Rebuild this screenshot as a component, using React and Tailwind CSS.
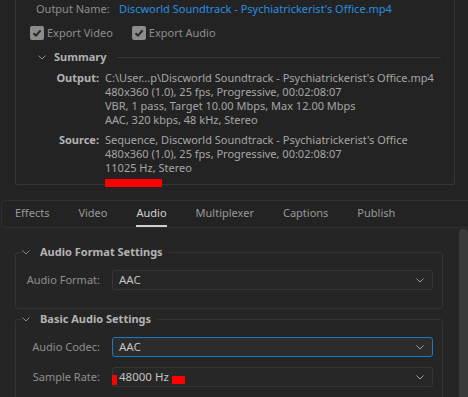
import React from 'react';

const Chevron = ({ className = '' }) => (
  <svg width="8" height="5" viewBox="0 0 8 5" className={className}>
    <path d="M0.5 0.5 L4 4 L7.5 0.5" fill="none" stroke="currentColor" strokeWidth="1" />
  </svg>
);

const Check = () => (
  <span className="w-[14px] h-[14px] rounded-[2px] bg-[#8c8c8c] flex items-center justify-center">
    <svg width="10" height="10" viewBox="0 0 10 10">
      <path d="M1.5 5.2 L4 7.6 L8.6 2.4" fill="none" stroke="#262626" strokeWidth="2" />
    </svg>
  </span>
);

const Dropdown = ({ value, focused }) => (
  <div
    className={`w-[321px] h-[20px] rounded-[3px] border flex items-center justify-between pl-[6px] pr-[8px] ${
      focused ? 'border-[#1a7bc0] bg-[#2c2c2c]' : 'border-[#363636] bg-[#272727]'
    }`}
  >
    <span className="text-[11.5px] text-[#c4c4c4]">{value}</span>
    <Chevron className="text-[#a0a0a0]" />
  </div>
);

const Section = ({ title, className = '', children }) => (
  <fieldset className={`ml-[15px] w-[428px] border border-[#343434] rounded-[3px] ${className}`}>
    <legend className="ml-[6px] pr-[6px] h-[18px] flex items-center">
      <Chevron className="text-[#8a8a8a]" />
      <span className="ml-[10px] text-[11px] font-bold text-[#b4b4b4]">{title}</span>
    </legend>
    {children}
  </fieldset>
);

const Field = ({ label, className = '', children }) => (
  <div className={`flex items-center ${className}`}>
    <span className="w-[84px] text-right text-[11px] text-[#8e8e8e]">{label}</span>
    <div className="ml-[12px]">{children}</div>
  </div>
);

const tabs = ['Effects', 'Video', 'Audio', 'Multiplexer', 'Captions', 'Publish'];

export default function App() {
  return (
    <div className="relative w-[468px] h-[397px] overflow-hidden bg-[#232323] font-['Noto_Sans',sans-serif]">
      {/* Export settings box */}
      <div className="ml-[15px] w-[440px] h-[185px] border-x border-b border-[#363636] rounded-b-[3px]">
        <div className="h-[18px] flex items-center pl-[20px] text-[11px]">
          <span className="w-[83px] text-[#8e8e8e]">Output Name:</span>
          <span className="text-[#2a8ee0]">Discworld Soundtrack - Psychiatrickerist's Office.mp4</span>
        </div>
        <div className="mt-[6px] h-[18px] flex items-center pl-[14px] text-[11px] text-[#8e8e8e]">
          <Check />
          <span className="ml-[3px]">Export Video</span>
          <span className="ml-[19px]"><Check /></span>
          <span className="ml-[3px]">Export Audio</span>
        </div>
        <div className="mt-[6px] h-[18px] flex items-center pl-[22px] pr-[13px]">
          <Chevron className="text-[#8a8a8a]" />
          <span className="ml-[8px] text-[11px] font-bold text-[#b0b0b0]">Summary</span>
          <div className="flex-1 ml-[11px] h-px bg-[#363636]" />
        </div>
        <div className="mt-[5px] grid grid-cols-[83px_1fr] gap-x-[6px] text-[11px] leading-[14px]">
          <span className="text-right font-bold text-[#b4b4b4]">Output:</span>
          <div className="text-[#a6a6a6] whitespace-nowrap">
            <div>C:\User...p\Discworld Soundtrack - Psychiatrickerist's Office.mp4</div>
            <div>480x360 (1.0), 25 fps, Progressive, 00:02:08:07</div>
            <div>VBR, 1 pass, Target 10.00 Mbps, Max 12.00 Mbps</div>
            <div>AAC, 320 kbps, 48 kHz, Stereo</div>
          </div>
          <span className="mt-[6px] text-right font-bold text-[#b4b4b4]">Source:</span>
          <div className="mt-[6px] text-[#a6a6a6] whitespace-nowrap">
            <div>Sequence, Discworld Soundtrack - Psychiatrickerist's Office</div>
            <div>480x360 (1.0), 25 fps, Progressive, 00:02:08:07</div>
            <div>11025 Hz, Stereo</div>
          </div>
        </div>
      </div>

      {/* Tabs */}
      <div className="mt-[15px] ml-[1px] h-[28px] border-y border-l border-[#2f2f2f] rounded-l-[3px] flex items-stretch gap-[29px] pl-[13px] text-[11px]">
        {tabs.map((t) => (
          <div
            key={t}
            className={`flex items-center border-b-2 ${
              t === 'Audio' ? 'border-[#d0d0d0] text-[#d4d4d4]' : 'border-transparent text-[#999999]'
            }`}
          >
            {t}
          </div>
        ))}
      </div>

      {/* Settings */}
      <div className="flex h-[170px] bg-[#252525]">
        <div className="flex-1">
          <Section title="Audio Format Settings" className="mt-[15px] pb-[18px]">
            <Field label="Audio Format:" className="mt-[9px]">
              <Dropdown value="AAC" />
            </Field>
          </Section>
          <Section title="Basic Audio Settings" className="mt-[1px] pb-[20px]">
            <Field label="Audio Codec:" className="mt-[9px]">
              <Dropdown value="AAC" focused />
            </Field>
            <Field label="Sample Rate:" className="mt-[10px]">
              <Dropdown value="48000 Hz" />
            </Field>
          </Section>
        </div>
        <div className="w-[9px] mt-[1px] rounded-t-[4px] bg-[#3a3a3a]" />
      </div>

      {/* red annotation marks */}
      <div className="absolute left-[105px] top-[179px] w-[57px] h-[8px] bg-[#ff0000]" />
      <div className="absolute left-[112px] top-[375px] w-[5px] h-[10px] bg-[#ff0000]" />
      <div className="absolute left-[172px] top-[376px] w-[13px] h-[8px] bg-[#ff0000]" />
    </div>
  );
}
